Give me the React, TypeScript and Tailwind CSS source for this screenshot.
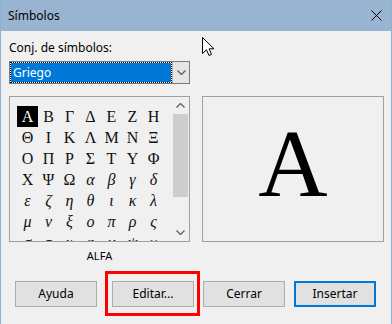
import React from "react";

const upper = ["Α", "Β", "Γ", "Δ", "Ε", "Ζ", "Η", "Θ", "Ι", "Κ", "Λ", "Μ", "Ν", "Ξ", "Ο", "Π", "Ρ", "Σ", "Τ", "Υ", "Φ", "Χ", "Ψ", "Ω"];
const lower = ["α", "β", "γ", "δ", "ε", "ζ", "η", "θ", "ι", "κ", "λ", "μ", "ν", "ξ", "ο", "π", "ρ", "ς", "σ", "τ", "υ", "φ", "χ", "ψ", "ω"];

const uiFont = { fontFamily: '"Noto Sans", "Open Sans", sans-serif' };

function Chevron({ down }: { down?: boolean }) {
  return (
    <svg width="9" height="5" viewBox="0 0 9 5">
      <path
        d={down ? "M0.5 0.5 L4.5 4.5 L8.5 0.5" : "M0.5 4.5 L4.5 0.5 L8.5 4.5"}
        fill="none"
        stroke="#606060"
        strokeWidth="1.3"
      />
    </svg>
  );
}

function Button({ label, primary }: { label: string; primary?: boolean }) {
  return (
    <div
      className={
        "w-[82px] h-[26px] flex items-center justify-center bg-[#e1e1e1] text-[12px] text-black " +
        (primary ? "border-2 border-[#0078d7]" : "border border-[#adadad]")
      }
    >
      {label}
    </div>
  );
}

export default function App() {
  const chars = [...upper, ...lower];

  return (
    <div
      className="relative w-[392px] h-[324px] bg-[#f0f0f0] border-x border-[#8fb0d6] flex flex-col overflow-hidden"
      style={uiFont}
    >
      {/* title bar */}
      <div className="h-[31px] shrink-0 bg-[#99b4d1] flex items-center justify-between pl-[8px] pr-[10px] -mx-px px-[9px]">
        <span className="text-[12px] text-black">Símbolos</span>
        <svg width="11" height="11" viewBox="0 0 11 11">
          <path d="M0.5 0.5 L10.5 10.5 M10.5 0.5 L0.5 10.5" stroke="#000" strokeWidth="1" />
        </svg>
      </div>

      <div className="pl-[8px] flex flex-col">
        <div className="mt-[9px] h-[16px] leading-[16px] text-[12px] text-black">Conj. de símbolos:</div>

        {/* combo box */}
        <div className="mt-[5px] w-[181px] h-[23px] border border-[#7a7a7a] flex bg-white">
          <div className="flex-1 bg-white">
            <div className="h-full bg-[#0078d7] bg-clip-padding border border-dotted border-black flex items-center pl-[2px] text-[12px] text-white">
              Griego
            </div>
          </div>
          <div className="w-[17px] bg-[#e5e5e5] border-l border-[#adadad] flex items-center justify-center">
            <Chevron down />
          </div>
        </div>

        <div className="mt-[12px] flex gap-[12px]">
          <div className="flex flex-col">
            {/* symbol grid */}
            <div className="w-[181px] h-[146px] border border-[#a0a0a0] flex overflow-hidden">
              <div className="flex-1 pl-[7px] pt-[9px] overflow-hidden">
                <div className="grid grid-cols-[repeat(7,21px)] auto-rows-[21px]">
                  {chars.map((c, i) => {
                    const isLower = i >= upper.length;
                    return (
                      <div
                        key={i}
                        className={
                          "flex items-center justify-center text-[16px] leading-none " +
                          (i === 0 ? "bg-black text-white " : "text-[#111] ") +
                          (isLower ? "italic" : "")
                        }
                        style={{ fontFamily: '"Liberation Serif", "DejaVu Serif", serif' }}
                      >
                        {c}
                      </div>
                    );
                  })}
                </div>
              </div>
              {/* scrollbar */}
              <div className="w-[17px] flex flex-col bg-[#f0f0f0]">
                <div className="h-[17px] flex items-center justify-center">
                  <Chevron />
                </div>
                <div className="mx-px h-[83px] bg-[#cdcdcd]" />
                <div className="flex-1" />
                <div className="h-[17px] flex items-center justify-center">
                  <Chevron down />
                </div>
              </div>
            </div>
            <div className="mt-[6px] h-[15px] leading-[15px] text-[11px] text-black text-center">ALFA</div>
          </div>

          {/* preview */}
          <div
            className="w-[182px] h-[146px] border border-[#a0a0a0] flex items-center justify-center pb-[11px] text-[96px] leading-none text-black"
            style={{ fontFamily: '"Liberation Serif", "DejaVu Serif", serif' }}
          >
            Α
          </div>
        </div>
      </div>

      {/* buttons */}
      <div className="mt-[18px] pl-[14px] flex">
        <Button label="Ayuda" />
        <div className="ml-[15px]">
          <Button label="Editar..." />
        </div>
        <div className="ml-[9px]">
          <Button label="Cerrar" />
        </div>
        <div className="ml-[9px]">
          <Button label="Insertar" primary />
        </div>
      </div>

      {/* annotation */}
      <div className="absolute left-[104px] top-[271px] w-[95px] h-[45px] border-[3px] border-[#ff0000]" />

      {/* mouse pointer */}
      <svg className="absolute left-[201px] top-[37px]" width="13" height="20" viewBox="0 0 13 20">
        <path
          d="M0.5 0.5 L0.5 16.5 L4.5 12.8 L7 18.5 L9.5 17.4 L7.1 11.8 L12 11.8 Z"
          fill="#fff"
          stroke="#000"
          strokeWidth="1"
          strokeLinejoin="miter"
        />
      </svg>
    </div>
  );
}
